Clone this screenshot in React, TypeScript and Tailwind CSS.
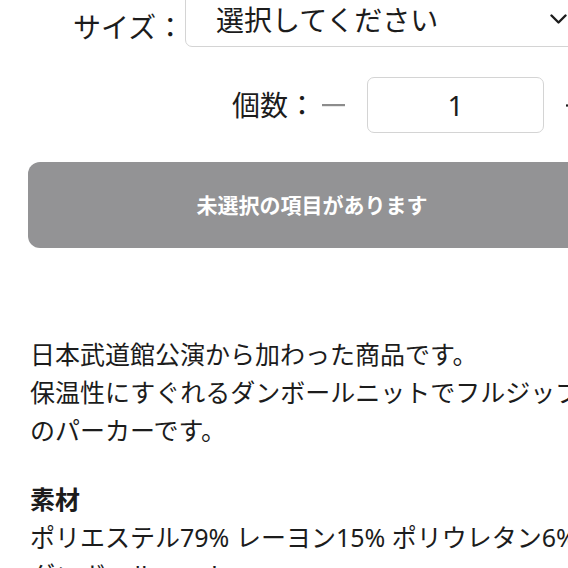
import React from "react";

export default function App() {
  const font = "font-['Noto_Sans','Noto_Sans_CJK_JP',sans-serif]";
  return (
    <div className={`w-[568px] h-[568px] overflow-hidden bg-white text-[#1c1c1c] ${font}`}>
      <div className="w-[624px] px-[28px] mt-[-9px] flex flex-col">
        {/* Size row */}
        <div className="flex items-start pl-[45px]">
          <span className="text-[28px] leading-[28px] pt-[22px] w-[112px] shrink-0">サイズ：</span>
          <div className="flex-1 h-[56px] border border-[#d4d4d4] rounded-[7px] flex items-center justify-between pl-[30px] pr-[28px]">
            <span className="text-[28px] leading-[28px] pt-[1px]">選択してください</span>
            <svg width="17" height="11" viewBox="0 0 17 11" className="mt-[1px]">
              <path d="M1.5 1.5 L8.5 8.5 L15.5 1.5" fill="none" stroke="#1c1c1c" strokeWidth="2.4" strokeLinecap="round" strokeLinejoin="round" />
            </svg>
          </div>
        </div>

        {/* Quantity row */}
        <div className="flex items-center pl-[204px] mt-[30px]">
          <span className="text-[28px] leading-[28px] w-[84px] shrink-0">個数：</span>
          <svg width="23" height="4" viewBox="0 0 23 4" className="ml-[6px] mr-[22px] shrink-0">
            <rect x="0" y="1" width="23" height="2.2" fill="#8c8c8c" />
          </svg>
          <div className="w-[177px] h-[56px] shrink-0 border border-[#d4d4d4] rounded-[7px] flex items-center justify-center">
            <span className="text-[28px] leading-[28px]">1</span>
          </div>
          <svg width="23" height="23" viewBox="0 0 23 23" className="ml-[22px] shrink-0">
            <rect x="0" y="10.4" width="23" height="2.2" fill="#1c1c1c" />
            <rect x="10.4" y="0" width="2.2" height="23" fill="#1c1c1c" />
          </svg>
        </div>

        {/* Button */}
        <div className="mt-[29px] h-[86px] rounded-[12px] bg-[#939395] flex items-center justify-center">
          <span className="text-white font-bold text-[21px] leading-[21px]">未選択の項目があります</span>
        </div>

        {/* Description */}
        <div className="mt-[87px] pl-[2px] text-[25px] leading-[38px]">
          <p>日本武道館公演から加わった商品です。</p>
          <p className="whitespace-nowrap">保温性にすぐれるダンボールニットでフルジップ</p>
          <p>のパーカーです。</p>
          <p className="mt-[31px] font-bold">素材</p>
          <p className="whitespace-nowrap">ポリエステル79% レーヨン15% ポリウレタン6%</p>
          <p className="whitespace-nowrap">ダンボールニット</p>
        </div>
      </div>
    </div>
  );
}
